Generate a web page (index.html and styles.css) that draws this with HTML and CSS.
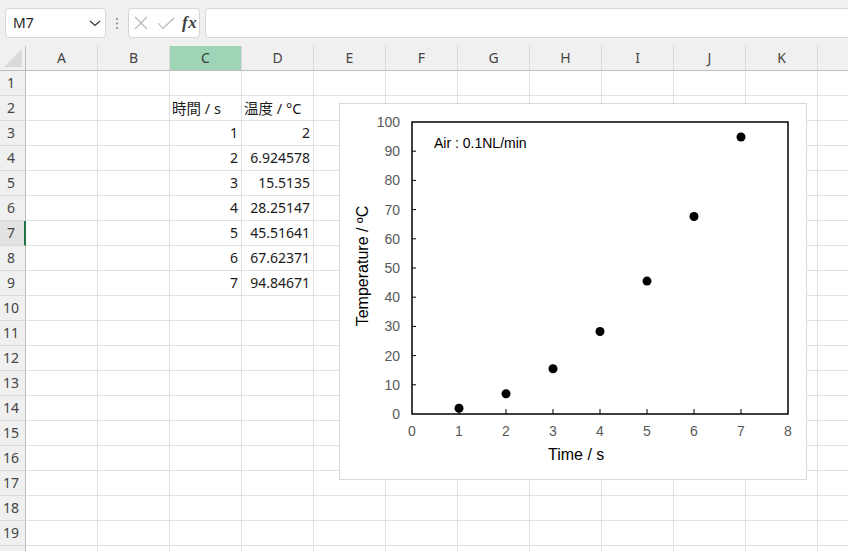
FILE: index.html
```html
<!DOCTYPE html>
<html lang="ja">
<head>
<meta charset="utf-8">
<title>Sheet</title>
<link rel="stylesheet" href="styles.css">
</head>
<body>
<div class="app">
  <div class="toolbar">
    <div class="namebox">
      <span class="name">M7</span>
      <svg class="chev" width="12" height="8" viewBox="0 0 12 8"><path d="M1 2 L6 6.5 L11 2" fill="none" stroke="#3a3a3a" stroke-width="1.3"/></svg>
    </div>
    <div class="dots">
      <svg width="4" height="14" viewBox="0 0 4 14"><circle cx="2" cy="2" r="1.1" fill="#8c8c8c"/><circle cx="2" cy="6.5" r="1.1" fill="#8c8c8c"/><circle cx="2" cy="11" r="1.1" fill="#8c8c8c"/></svg>
    </div>
    <div class="fbtns">
      <svg class="ico-x" width="14" height="14" viewBox="0 0 14 14"><path d="M1 1 L13 13 M13 1 L1 13" stroke="#b5b5b5" stroke-width="1.1" fill="none"/></svg>
      <svg class="ico-ok" width="18" height="13" viewBox="0 0 18 13"><path d="M1 6 L6 11.5 L17 1" stroke="#b5b5b5" stroke-width="1.1" fill="none"/></svg>
      <span class="fx">fx</span>
    </div>
    <div class="formula"></div>
  </div>

  <div class="sheet">
    <div class="row head">
      <div class="corner"><svg width="18" height="18" viewBox="0 0 18 18"><path d="M18 0 L18 18 L0 18 Z" fill="#d9d9d9"/></svg></div>
      <div class="ch">A</div><div class="ch">B</div><div class="ch sel">C</div><div class="ch">D</div><div class="ch">E</div><div class="ch">F</div><div class="ch">G</div><div class="ch">H</div><div class="ch">I</div><div class="ch">J</div><div class="ch">K</div><div class="ch"></div>
    </div>
    <div class="row"><div class="rh">1</div><div class="c"></div><div class="c"></div><div class="c"></div><div class="c"></div><div class="c"></div><div class="c"></div><div class="c"></div><div class="c"></div><div class="c"></div><div class="c"></div><div class="c"></div><div class="c"></div></div>
    <div class="row"><div class="rh">2</div><div class="c"></div><div class="c"></div><div class="c txt">時間 / s</div><div class="c txt">温度 / °C</div><div class="c"></div><div class="c"></div><div class="c"></div><div class="c"></div><div class="c"></div><div class="c"></div><div class="c"></div><div class="c"></div></div>
    <div class="row"><div class="rh">3</div><div class="c"></div><div class="c"></div><div class="c num">1</div><div class="c num">2</div><div class="c"></div><div class="c"></div><div class="c"></div><div class="c"></div><div class="c"></div><div class="c"></div><div class="c"></div><div class="c"></div></div>
    <div class="row"><div class="rh">4</div><div class="c"></div><div class="c"></div><div class="c num">2</div><div class="c num">6.924578</div><div class="c"></div><div class="c"></div><div class="c"></div><div class="c"></div><div class="c"></div><div class="c"></div><div class="c"></div><div class="c"></div></div>
    <div class="row"><div class="rh">5</div><div class="c"></div><div class="c"></div><div class="c num">3</div><div class="c num">15.5135</div><div class="c"></div><div class="c"></div><div class="c"></div><div class="c"></div><div class="c"></div><div class="c"></div><div class="c"></div><div class="c"></div></div>
    <div class="row"><div class="rh">6</div><div class="c"></div><div class="c"></div><div class="c num">4</div><div class="c num">28.25147</div><div class="c"></div><div class="c"></div><div class="c"></div><div class="c"></div><div class="c"></div><div class="c"></div><div class="c"></div><div class="c"></div></div>
    <div class="row"><div class="rh sel">7</div><div class="c"></div><div class="c"></div><div class="c num">5</div><div class="c num">45.51641</div><div class="c"></div><div class="c"></div><div class="c"></div><div class="c"></div><div class="c"></div><div class="c"></div><div class="c"></div><div class="c"></div></div>
    <div class="row"><div class="rh">8</div><div class="c"></div><div class="c"></div><div class="c num">6</div><div class="c num">67.62371</div><div class="c"></div><div class="c"></div><div class="c"></div><div class="c"></div><div class="c"></div><div class="c"></div><div class="c"></div><div class="c"></div></div>
    <div class="row"><div class="rh">9</div><div class="c"></div><div class="c"></div><div class="c num">7</div><div class="c num">94.84671</div><div class="c"></div><div class="c"></div><div class="c"></div><div class="c"></div><div class="c"></div><div class="c"></div><div class="c"></div><div class="c"></div></div>
    <div class="row"><div class="rh">10</div><div class="c"></div><div class="c"></div><div class="c"></div><div class="c"></div><div class="c"></div><div class="c"></div><div class="c"></div><div class="c"></div><div class="c"></div><div class="c"></div><div class="c"></div><div class="c"></div></div>
    <div class="row"><div class="rh">11</div><div class="c"></div><div class="c"></div><div class="c"></div><div class="c"></div><div class="c"></div><div class="c"></div><div class="c"></div><div class="c"></div><div class="c"></div><div class="c"></div><div class="c"></div><div class="c"></div></div>
    <div class="row"><div class="rh">12</div><div class="c"></div><div class="c"></div><div class="c"></div><div class="c"></div><div class="c"></div><div class="c"></div><div class="c"></div><div class="c"></div><div class="c"></div><div class="c"></div><div class="c"></div><div class="c"></div></div>
    <div class="row"><div class="rh">13</div><div class="c"></div><div class="c"></div><div class="c"></div><div class="c"></div><div class="c"></div><div class="c"></div><div class="c"></div><div class="c"></div><div class="c"></div><div class="c"></div><div class="c"></div><div class="c"></div></div>
    <div class="row"><div class="rh">14</div><div class="c"></div><div class="c"></div><div class="c"></div><div class="c"></div><div class="c"></div><div class="c"></div><div class="c"></div><div class="c"></div><div class="c"></div><div class="c"></div><div class="c"></div><div class="c"></div></div>
    <div class="row"><div class="rh">15</div><div class="c"></div><div class="c"></div><div class="c"></div><div class="c"></div><div class="c"></div><div class="c"></div><div class="c"></div><div class="c"></div><div class="c"></div><div class="c"></div><div class="c"></div><div class="c"></div></div>
    <div class="row"><div class="rh">16</div><div class="c"></div><div class="c"></div><div class="c"></div><div class="c"></div><div class="c"></div><div class="c"></div><div class="c"></div><div class="c"></div><div class="c"></div><div class="c"></div><div class="c"></div><div class="c"></div></div>
    <div class="row"><div class="rh">17</div><div class="c"></div><div class="c"></div><div class="c"></div><div class="c"></div><div class="c"></div><div class="c"></div><div class="c"></div><div class="c"></div><div class="c"></div><div class="c"></div><div class="c"></div><div class="c"></div></div>
    <div class="row"><div class="rh">18</div><div class="c"></div><div class="c"></div><div class="c"></div><div class="c"></div><div class="c"></div><div class="c"></div><div class="c"></div><div class="c"></div><div class="c"></div><div class="c"></div><div class="c"></div><div class="c"></div></div>
    <div class="row"><div class="rh">19</div><div class="c"></div><div class="c"></div><div class="c"></div><div class="c"></div><div class="c"></div><div class="c"></div><div class="c"></div><div class="c"></div><div class="c"></div><div class="c"></div><div class="c"></div><div class="c"></div></div>
    <div class="row"><div class="rh"></div><div class="c"></div><div class="c"></div><div class="c"></div><div class="c"></div><div class="c"></div><div class="c"></div><div class="c"></div><div class="c"></div><div class="c"></div><div class="c"></div><div class="c"></div><div class="c"></div></div>
  </div>

  <svg class="chart" width="469" height="377" viewBox="0 0 469 377">
    <rect x="0.5" y="0.5" width="467" height="376" fill="#ffffff" stroke="#d9d9d9" stroke-width="1"/>
    <g class="yticks" stroke="#000" stroke-width="1">
      <line x1="73" y1="281.8" x2="77" y2="281.8"/>
      <line x1="73" y1="252.6" x2="77" y2="252.6"/>
      <line x1="73" y1="223.4" x2="77" y2="223.4"/>
      <line x1="73" y1="194.2" x2="77" y2="194.2"/>
      <line x1="73" y1="165" x2="77" y2="165"/>
      <line x1="73" y1="135.8" x2="77" y2="135.8"/>
      <line x1="73" y1="106.6" x2="77" y2="106.6"/>
      <line x1="73" y1="77.4" x2="77" y2="77.4"/>
      <line x1="73" y1="48.2" x2="77" y2="48.2"/>
    </g>
    <g class="xticks" stroke="#000" stroke-width="1">
      <line x1="120" y1="311" x2="120" y2="306"/>
      <line x1="167" y1="311" x2="167" y2="306"/>
      <line x1="214" y1="311" x2="214" y2="306"/>
      <line x1="261" y1="311" x2="261" y2="306"/>
      <line x1="308" y1="311" x2="308" y2="306"/>
      <line x1="355" y1="311" x2="355" y2="306"/>
      <line x1="402" y1="311" x2="402" y2="306"/>
    </g>
    <rect x="73" y="19" width="376" height="292" fill="none" stroke="#000" stroke-width="1.5"/>
    <g class="ylab" fill="#595959" font-size="14" text-anchor="end">
      <text x="61" y="316">0</text>
      <text x="61" y="286.8">10</text>
      <text x="61" y="257.6">20</text>
      <text x="61" y="228.4">30</text>
      <text x="61" y="199.2">40</text>
      <text x="61" y="170">50</text>
      <text x="61" y="140.8">60</text>
      <text x="61" y="111.6">70</text>
      <text x="61" y="82.4">80</text>
      <text x="61" y="53.2">90</text>
      <text x="61" y="24">100</text>
    </g>
    <g class="xlab" fill="#595959" font-size="14" text-anchor="middle">
      <text x="73" y="333">0</text>
      <text x="120" y="333">1</text>
      <text x="167" y="333">2</text>
      <text x="214" y="333">3</text>
      <text x="261" y="333">4</text>
      <text x="308" y="333">5</text>
      <text x="355" y="333">6</text>
      <text x="402" y="333">7</text>
      <text x="449" y="333">8</text>
    </g>
    <g class="pts" fill="#000">
      <circle cx="120" cy="305.2" r="4.5"/>
      <circle cx="167" cy="290.8" r="4.5"/>
      <circle cx="214" cy="265.7" r="4.5"/>
      <circle cx="261" cy="228.5" r="4.5"/>
      <circle cx="308" cy="178.1" r="4.5"/>
      <circle cx="355" cy="113.5" r="4.5"/>
      <circle cx="402" cy="34.0" r="4.5"/>
    </g>
    <text class="note" x="95" y="45" font-size="14" fill="#000">Air : 0.1NL/min</text>
    <text class="xtitle" x="209" y="357" font-size="16" fill="#000">Time / s</text>
    <text class="ytitle" x="29" y="163" font-size="16" fill="#000" text-anchor="middle" transform="rotate(-90 29 163)">Temperature / ºC</text>
  </svg>
</div>
</body>
</html>
```

FILE: styles.css
```css
* { box-sizing: border-box; }
html, body { margin: 0; padding: 0; background: #ffffff; }
body {
  width: 848px;
  height: 551px;
  overflow: hidden;
  font-family: "Noto Sans", "Noto Sans CJK JP", sans-serif;
  font-size: 14px;
  color: #222;
}
.app { position: relative; width: 848px; height: 551px; overflow: hidden; }

.toolbar {
  height: 46px;
  background: #f0f0f0;
  display: flex;
  align-items: flex-start;
  padding: 8px 0 0 5px;
}
.namebox {
  width: 101px;
  height: 30px;
  background: #fff;
  border: 1px solid #d6d6d6;
  border-radius: 4px;
  display: flex;
  align-items: center;
  justify-content: space-between;
  padding: 0 4px 0 7px;
}
.name { color: #262626; font-size: 14px; line-height: 28px; }
.chev { display: block; margin-right: 0; }
.dots {
  width: 22px;
  height: 30px;
  display: flex;
  align-items: center;
  justify-content: center;
  padding-top: 1px;
}
.dots svg { display: block; }
.fbtns {
  width: 72px;
  height: 30px;
  background: #fff;
  border: 1px solid #d6d6d6;
  border-radius: 4px;
  display: flex;
  align-items: center;
  padding-left: 5px;
}
.ico-x { display: block; margin-right: 9px; }
.ico-ok { display: block; margin-right: 7px; }
.fx {
  font-family: "Liberation Serif", "DejaVu Serif", serif;
  font-style: italic;
  font-weight: bold;
  font-size: 17px;
  color: #404040;
  letter-spacing: 0.5px;
  line-height: 28px;
}
.formula {
  flex: 1;
  height: 30px;
  margin-left: 5px;
  margin-right: -10px;
  background: #fff;
  border: 1px solid #d6d6d6;
  border-radius: 4px;
}

.sheet { display: flex; flex-direction: column; }
.row {
  display: grid;
  grid-template-columns: 26px repeat(12, 72px);
  height: 25px;
}
.c {
  border-right: 1px solid #e1e1e1;
  border-bottom: 1px solid #e1e1e1;
  line-height: 24px;
  white-space: nowrap;
  overflow: visible;
  color: #1a1a1a;
}
.c.num { text-align: right; padding-right: 3px; }
.c.txt { text-align: left; padding-left: 2px; font-size: 14.5px; }

.head .corner {
  background: #f0f0f0;
  border-right: 1px solid #bdbdbd;
  border-bottom: 1px solid #bdbdbd;
  display: flex;
  align-items: flex-end;
  justify-content: flex-end;
  padding: 0 3px 3px 0;
}
.head .corner svg { display: block; }
.ch {
  background: #f0f0f0;
  border-right: 1px solid #dadada;
  border-bottom: 1px solid #bdbdbd;
  text-align: center;
  line-height: 24px;
  color: #444;
}
.ch.sel { background: #9fd5b7; color: #3a3a3a; }
.rh {
  background: #f0f0f0;
  border-right: 1px solid #bdbdbd;
  border-bottom: 1px solid #dadada;
  text-align: center;
  padding-right: 3px;
  line-height: 24px;
  color: #444;
}
.rh.sel {
  background: #e2e2e2;
  border-right: 2px solid #217346;
  padding-right: 2px;
}

.chart {
  position: absolute;
  left: 339px;
  top: 103px;
  font-family: "Liberation Sans", Arial, sans-serif;
}
```
